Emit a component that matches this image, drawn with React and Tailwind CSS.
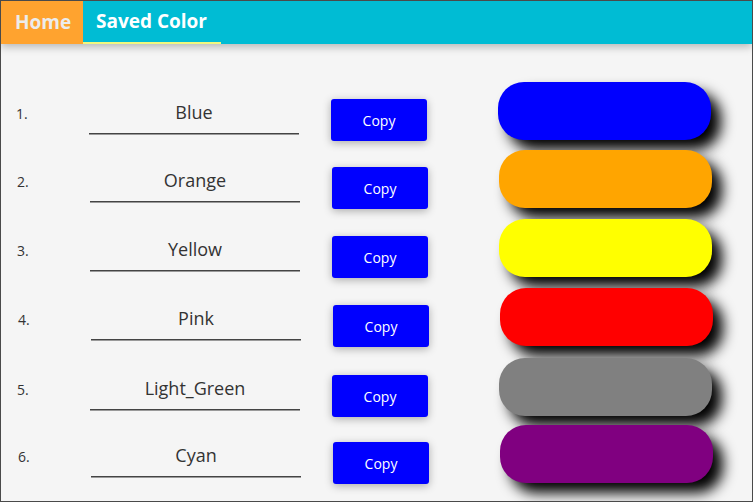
const rows = [
  { n: '1.', name: 'Blue', swatch: 'bg-[#0000ff]', gap: 'mt-[38px]', shift: '' },
  { n: '2.', name: 'Orange', swatch: 'bg-[#ffa500]', gap: 'mt-[10px]', shift: 'ml-px' },
  { n: '3.', name: 'Yellow', swatch: 'bg-[#ffff00]', gap: 'mt-[11px]', shift: 'ml-px' },
  { n: '4.', name: 'Pink', swatch: 'bg-[#ff0000]', gap: 'mt-[11px]', shift: 'ml-[2px]' },
  { n: '5.', name: 'Light_Green', swatch: 'bg-[#808080]', gap: 'mt-[12px]', shift: 'ml-px' },
  { n: '6.', name: 'Cyan', swatch: 'bg-[#800080]', gap: 'mt-[9px]', shift: 'ml-[2px]' },
];

const ColorRow = ({ row }) => (
  <div className={`flex items-start h-[58px] ${row.gap} ${row.shift}`}>
    <div className="w-[88px] pl-[15px] pt-[22px] text-[14px] leading-[20px] text-[#333]">{row.n}</div>
    <div className="w-[210px] pt-[17px]">
      <p className="text-center text-[18px] leading-[26px] text-[#333]">{row.name}</p>
      <div className="mt-[8px] h-px bg-[#444] border-b border-[#9a9a9a] box-content"></div>
    </div>
    <button className="ml-[32px] mt-[17px] w-[96px] h-[42px] rounded-[3px] bg-[#0000ff] text-white text-[14px] shadow-[0_2px_8px_rgba(0,0,0,0.3)]">
      Copy
    </button>
    <div className={`ml-[71px] w-[213px] h-[58px] rounded-[26px] ${row.swatch} shadow-[10px_10px_14px_#000]`}></div>
  </div>
);

const App = () => {
  return (
    <div
      className="w-[753px] h-[502px] border border-[#4a4a4a] bg-[#f5f5f5] overflow-hidden"
      style={{ fontFamily: '"Open Sans", "Noto Sans", sans-serif' }}
    >
      <div className="relative z-10 flex h-[43px] bg-[#00bcd4] shadow-[0_3px_8px_rgba(0,0,0,0.25)]">
        <div className="flex items-center w-[82px] pl-[14px] bg-[#ffa32f] text-[19px] font-bold text-[#ececec]">
          Home
        </div>
        <div className="flex items-center w-[138px] pl-[13px] text-[19px] font-bold text-white border-b-[2px] border-[#f2f77e]">
          Saved Color
        </div>
      </div>

      <div>
        {rows.map((row) => (
          <ColorRow key={row.n} row={row} />
        ))}
      </div>
    </div>
  );
};

export default App;
